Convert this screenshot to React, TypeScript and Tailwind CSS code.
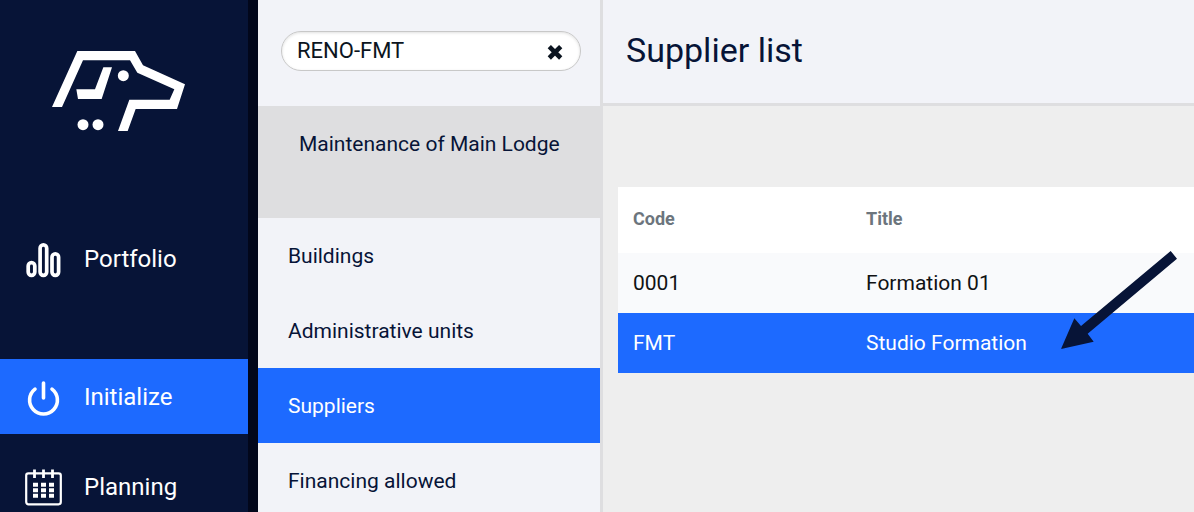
import { useState } from "react";
import type { ReactNode } from "react";
import clsx from "clsx";

const suppliers = [
    { code: "0001", title: "Formation 01" },
    { code: "FMT", title: "Studio Formation" },
];

const sections = ["Buildings", "Administrative units", "Suppliers", "Financing allowed"];

const Logo = () => (
    <svg viewBox="36 32 399 240" className="w-[133px] h-20 fill-white" role="img" aria-label="Home">
        <path d="M36 200 112 32H285L309 75 435 132 411 206H287L263 272H234L268 178H389L403 147 292 97 270 60H129L66 200Z"/>
        <path d="M190 81H216L185 176H114L109 147H165Z"/>
        <circle cx="250" cy="106" r="16.5"/>
        <circle cx="129" cy="253" r="16.5"/>
        <circle cx="174" cy="253" r="16.5"/>
    </svg>
);

const PortfolioIcon = () => (
    <svg viewBox="0 0 38 38" className="size-[38px] shrink-0" fill="none" stroke="white" strokeWidth="3.7" aria-hidden="true">
        <rect x="3.2" y="22.7" width="6.6" height="12.6" rx="3.3"/>
        <rect x="15.1" y="4.9" width="6.6" height="30.4" rx="3.3"/>
        <rect x="27" y="13.9" width="6.6" height="21.4" rx="3.3"/>
    </svg>
);

const PowerIcon = () => (
    <svg viewBox="0 0 38 38" className="size-[38px] shrink-0" fill="none" stroke="white" strokeWidth="3.6" strokeLinecap="round" aria-hidden="true">
        <path d="M18.5 5V20"/>
        <path d="M10 11.1A13.9 13.9 0 1 0 27 11.1"/>
    </svg>
);

const CalendarIcon = () => (
    <svg viewBox="0 0 38 38" className="size-[38px] shrink-0" fill="none" stroke="white" aria-hidden="true">
        <rect x="1.2" y="5.3" width="34.6" height="31" rx="2.2" strokeWidth="2.2"/>
        <path d="M9.5 1.5V10M18.5 1.5V10M27.5 1.5V10" strokeWidth="2.8"/>
        <path d="M8 16.7H29M8 22.2H29M8 27.7H29" strokeWidth="4" strokeDasharray="5 3"/>
    </svg>
);

type NavItemProps = {
    label: string;
    icon: ReactNode;
    active?: boolean;
};

const NavItem = ({ label, icon, active }: NavItemProps) => (
    <a
        href="#"
        aria-current={active ? "page" : undefined}
        className={clsx(
            "flex items-center gap-[21px] h-[75px] pl-[25px] text-2xl text-white shrink-0",
            active && "bg-[#1d6aff]"
        )}
    >
        {icon}
        {label}
    </a>
);

const App = () => {
    const [query, setQuery] = useState("RENO-FMT");
    const [section, setSection] = useState("Suppliers");
    const [selected, setSelected] = useState("FMT");

    return (
        <div className="flex h-screen overflow-hidden bg-[#eeeeee] font-['Roboto',sans-serif] text-[#071437]">
            <nav className="flex flex-col w-[258px] shrink-0 bg-[#071437] border-r-10 border-[#02071b]">
                <div className="pt-[51px] pl-[52px] pb-[90px] shrink-0">
                    <Logo/>
                </div>
                <NavItem label="Portfolio" icon={<PortfolioIcon/>}/>
                <div className="mt-[63px] flex flex-col gap-[15px]">
                    <NavItem label="Initialize" icon={<PowerIcon/>} active/>
                    <NavItem label="Planning" icon={<CalendarIcon/>}/>
                </div>
            </nav>

            <aside className="w-[345px] shrink-0 bg-[#f2f3f8] border-r-3 border-[#dedee0]">
                <div className="h-[106px] pt-[31px] pl-[23px] pr-[19px]">
                    <div className="flex items-center h-10 pl-[15px] pr-4 bg-white border border-[#c8c8c8] rounded-full shadow-[inset_0_1px_3px_rgba(0,0,0,0.12)]">
                        <input
                            aria-label="Search project"
                            value={query}
                            onChange={(e) => setQuery(e.target.value)}
                            className="min-w-0 flex-1 pb-0.5 bg-transparent outline-none text-[22px] text-[#0b1420]"
                        />
                        <button type="button" aria-label="Clear" onClick={() => setQuery("")}>
                            <svg viewBox="0 0 18 18" className="size-[18px]" stroke="#0b1420" strokeWidth="4.6" strokeLinejoin="round" aria-hidden="true">
                                <path d="M3.3 4.6 14.7 16M14.7 4.6 3.3 16"/>
                            </svg>
                        </button>
                    </div>
                </div>
                <div className="h-28 pt-[22px] pl-[41px] bg-[#dedee0] text-[21px] leading-8">
                    Maintenance of Main Lodge
                </div>
                {sections.map((name) => (
                    <a
                        key={name}
                        href="#"
                        onClick={() => setSection(name)}
                        className={clsx(
                            "flex items-center h-[75px] pt-px pl-[30px] text-[21px] leading-8",
                            section === name && "bg-[#1d6aff] text-white"
                        )}
                    >
                        {name}
                    </a>
                ))}
            </aside>

            <main className="flex-1 min-w-0">
                <header className="flex items-center h-[106px] pl-[23px] pb-0.5 bg-[#f2f3f8] border-b-3 border-[#dedee0]">
                    <h1 className="text-[34px]">Supplier list</h1>
                </header>
                <div className="relative mt-[81px] ml-[15px]">
                    <table className="w-full table-fixed text-left text-[21px] leading-8 bg-white">
                        <thead>
                            <tr className="h-[66px] text-lg leading-7 text-[#6c757d]">
                                <th className="w-[233px] px-[15px] pb-0.5 font-bold">Code</th>
                                <th className="px-[15px] pb-0.5 font-bold">Title</th>
                            </tr>
                        </thead>
                        <tbody>
                            {suppliers.map(({ code, title }) => (
                                <tr
                                    key={code}
                                    onClick={() => setSelected(code)}
                                    className={clsx(
                                        "h-[60px]",
                                        selected === code
                                            ? "bg-[#1d6aff] text-white"
                                            : "bg-[#f9fafc] text-[#101214]"
                                    )}
                                >
                                    <td className="px-[15px]">{code}</td>
                                    <td className="px-[15px]">{title}</td>
                                </tr>
                            ))}
                        </tbody>
                    </table>
                    {/* pointer to the selected supplier */}
                    <svg viewBox="183 213 348 294" className="absolute left-[443px] top-16 w-[116px] h-[98px] fill-[#071437] pointer-events-none" aria-hidden="true">
                        <path d="M512 213 531 236 263 461 281 485 183 507 223 415 243 438Z"/>
                    </svg>
                </div>
            </main>
        </div>
    );
}

export default App;
